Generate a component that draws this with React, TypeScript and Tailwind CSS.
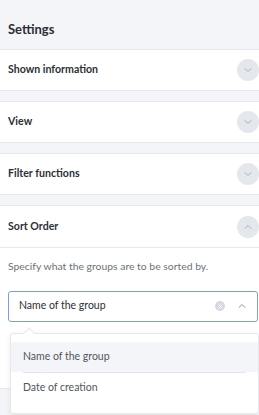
import { ChevronDown, ChevronUp, X } from "lucide-react";

const font = { fontFamily: "Lato, 'Open Sans', sans-serif" };

function CircleToggle({ open }: { open?: boolean }) {
  return (
    <span className="flex h-[22px] w-[22px] items-center justify-center rounded-full bg-[#e4e7ec] text-[#a0a6b0]">
      {open ? <ChevronUp size={12} strokeWidth={1.75} /> : <ChevronDown size={12} strokeWidth={1.75} />}
    </span>
  );
}

function Section({ title }: { title: string }) {
  return (
    <div className="flex h-[42px] items-center justify-between border-y border-[#e6e8ec] bg-white pl-2">
      <span className="text-[10.6px] font-bold text-[#2b2f36]">{title}</span>
      <CircleToggle />
    </div>
  );
}

export default function App() {
  return (
    <div className="h-[415px] w-[259px] overflow-hidden bg-[#f4f5f8]" style={font}>
      <div className="flex h-[49px] items-end pb-[10px] pl-2">
        <span className="text-[13px] font-bold text-[#2b2f36]">Settings</span>
      </div>
      <div className="flex flex-col gap-[10px]">
        <Section title="Shown information" />
        <Section title="View" />
        <Section title="Filter functions" />
        <div className="relative border-y border-[#e6e8ec] bg-white">
          <div className="flex h-[42px] items-center justify-between border-b border-[#e6e8ec] pl-2">
            <span className="text-[10.6px] font-bold text-[#2b2f36]">Sort Order</span>
            <CircleToggle open />
          </div>
          <div className="pb-[66px] pl-2 pr-px pt-[11px]">
            <p className="text-[10.4px] text-[#6b717a]">Specify what the groups are to be sorted by.</p>
            <div className="mt-[16px] flex h-[31px] items-center justify-between rounded-[3px] border-[1.5px] border-[#7d9ce8] pl-[10px] pr-[9px]">
              <span className="text-[10.5px] text-[#2b2f36]">Name of the group</span>
              <div className="flex items-center gap-[11px]">
                <span className="flex h-[10px] w-[10px] items-center justify-center rounded-full bg-[#d5d9df] text-white">
                  <X size={7} strokeWidth={3} />
                </span>
                <ChevronUp size={12} strokeWidth={1.75} className="text-[#7d8592]" />
              </div>
            </div>
          </div>
          <div className="absolute left-[10px] right-0 top-[127px] h-[81px] rounded-[3px] border border-[#e6e8ec] bg-white shadow-[0_2px_6px_rgba(0,0,0,0.08)]">
            <div className="absolute -top-[5px] left-[14px] h-[8px] w-[8px] rotate-45 border-l border-t border-[#e6e8ec] bg-white" />
            <div className="relative mt-[8px] flex h-[30px] items-center bg-[#f3f5f9] px-[12px] text-[10.5px] text-[#51565e]">
              Name of the group
            </div>
            <div className="mx-[12px] border-t border-[#e3e6ea]" />
            <div className="flex h-[30px] items-center px-[12px] text-[10.5px] text-[#51565e]">Date of creation</div>
          </div>
        </div>
      </div>
    </div>
  );
}
